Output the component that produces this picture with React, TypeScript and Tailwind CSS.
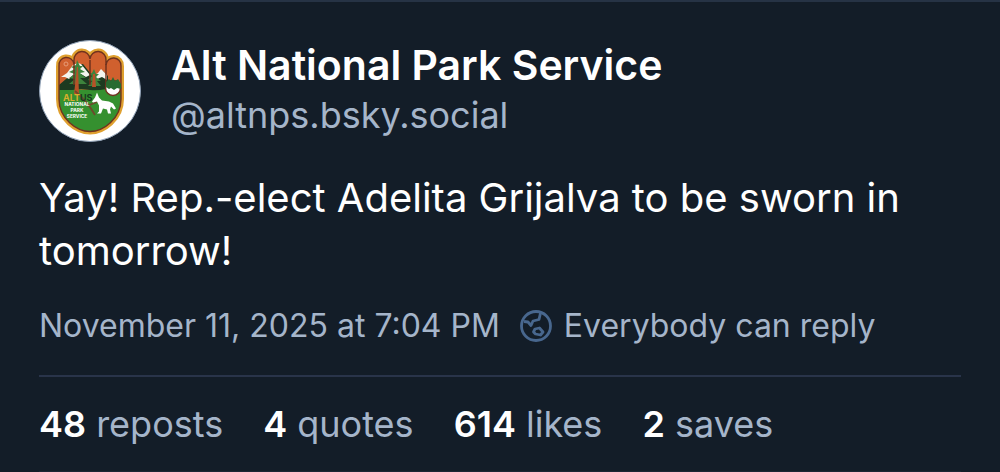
const HAND =
  "M20 26a7.5 7.5 0 0 1 15-2v-4a8 8 0 0 1 16-1a8 8 0 0 1 16 1v5a7.5 7.5 0 0 1 15 1v33c0 20-18 32.500-31 32.500S20 79 20 59z";

function Avatar() {
  return (
    <svg viewBox="0 0 102 102" className="size-[102px] shrink-0" role="img" aria-label="Alt National Park Service">
      <defs>
        <clipPath id="hand">
          <path d={HAND} />
        </clipPath>
      </defs>
      <circle cx="51" cy="51" r="50.5" fill="#fff" stroke="#8fa0b5" />
      <path d={HAND} fill="none" stroke="#dfa02f" strokeWidth="6" strokeLinejoin="round" />
      <path d={HAND} fill="#d0602e" />
      <g clipPath="url(#hand)">
        <path d="M20 45l7-6 6-5 5-9 6-1 8 10 6 5 6-8 5 5v13H20z" fill="#1d3a20" />
        <path d="M22 37l6-4 6-8 5-2 3 1 9 11-4 2-5-3-4 4-4-3-4 4-4-2zM54 36l5-3 3-4 6 6v5l-5-3-5 2z" fill="#f4f4ee" />
        <path d="M18 49q10-3 18 0 16 2 31-1l17 4v46H18z" fill="#35902f" />
        <path d="M20 50v-5h47v4q-9 2-16 1l-9-1-9 1z" fill="#1d3a20" />
        <path d="M38 20l3 6h3l-3 3 5 3-5 1 6 5h-6l7 6H30l6-5-6-1 6-4-6-2 6-3-4-2 5-2zM55 29l2 5h3l-3 3 5 4h-4l4 5H49l4-5-4-1 4-4-3-2 3-1z" fill="#3d833c" />
        <path d="M38 27h1l1 27h-5zM54 34h2l1 13h-4z" fill="#b85127" />
        <path d="M36 51q12 10 20 24M48 66l10-4" fill="none" stroke="#6c4a2b" strokeWidth="1.8" />
      </g>
      <path d="M35 45V22M51 45V20M67 50V24" fill="none" stroke="#70321e" strokeWidth="1.5" />
      <path d={HAND} fill="none" stroke="#70321e" strokeWidth="1.4" />
      <circle cx="74" cy="48" r="7.5" fill="#fff" stroke="#70321e" strokeWidth="1.5" />
      <path d="M67 47v-5l3-3 2 2 2-4 2 4 3-2 3 5v5l-4-1-3 2-3-2-2 1z" fill="#286b30" />
      <path d="M58 52.500l2 5 3 3 7 1 4 2 3 5-2 1-3-3-1 3 1 4h-3l-1-4-4-1-2 5h-4l2-2v-6l-2-4-4 1-1-1 3-4z" fill="#fff" />
      <circle cx="27" cy="24" r="2" fill="none" stroke="#e79b78" />
      <g fontFamily="Inter, sans-serif" fontWeight="700">
        <text x="24" y="61" fontSize="9" fill="#d8ae2c">ALT</text>
        <text x="41" y="61" fontSize="9" fill="#173a20">US</text>
        <g fontSize="4.8" fill="#fff" textAnchor="middle">
          <text x="38" y="66">NATIONAL</text>
          <text x="38" y="72">PARK</text>
          <text x="38" y="78">SERVICE</text>
        </g>
      </g>
    </svg>
  );
}

function Globe() {
  return (
    <svg viewBox="0 0 32 32" className="size-8 shrink-0" fill="none" stroke="#48678e" strokeWidth="2.8" strokeLinejoin="round" aria-hidden="true">
      <circle cx="16" cy="16" r="14.5" />
      <path d="M4 11.500l4 .5 3 3.500 2-4.500 6-1.500 1.500-6.500M15 19l4.500-1 3.500 4-2.500 3-5-1-2-2z" />
    </svg>
  );
}

const stats = [
  { count: 48, label: "reposts" },
  { count: 4, label: "quotes" },
  { count: 614, label: "likes" },
  { count: 2, label: "saves" },
];

export default function App() {
  return (
    <main className="min-h-screen border-t-2 border-[#263345] bg-[#131d28] px-[39px] pt-[38px] font-['Inter',sans-serif] text-[#a5b5ca]">
      <article>
        <header className="flex items-center gap-[30px]">
          <Avatar />
          <div>
            <h1 className="text-[41px] leading-[48px] font-semibold text-white">Alt National Park Service</h1>
            <p className="text-[36px] leading-[52px]">
              <a href="#profile">@altnps.bsky.social</a>
            </p>
          </div>
        </header>
        <p className="mt-[29px] text-[40px] leading-[53px] text-white">
          Yay! Rep.-elect Adelita Grijalva to be sworn in tomorrow!
        </p>
        <div className="mt-[29px] flex flex-wrap items-center gap-x-5 text-[32px] leading-10">
          <time dateTime="2025-11-11T19:04">November 11, 2025 at 7:04 PM</time>
          <button type="button" className="flex items-center gap-3">
            <Globe />
            Everybody can reply
          </button>
        </div>
        <footer className="mt-[29px] flex flex-wrap gap-x-10 border-y-2 border-t-[#29344a] border-b-[#1b2635] py-[25px] text-[36px] leading-[44px]">
          {stats.map(({ count, label }) => (
            <a key={label} href={`#${label}`}>
              <strong className="font-semibold text-white">{count}</strong> {label}
            </a>
          ))}
        </footer>
      </article>
    </main>
  );
}
